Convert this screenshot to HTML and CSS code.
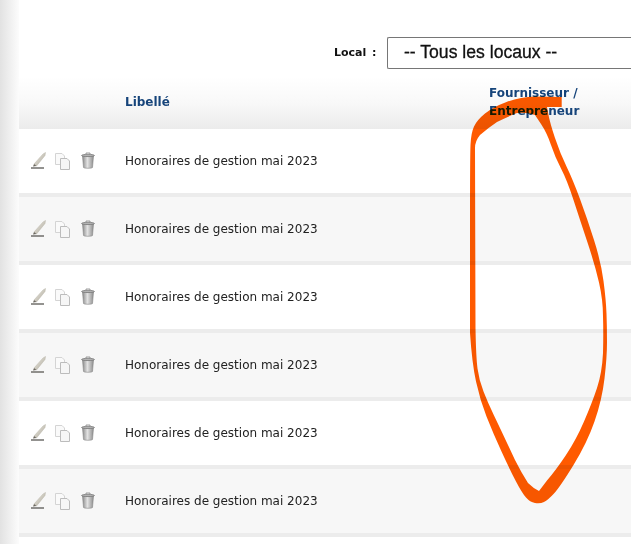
FILE: index.html
```html
<!DOCTYPE html>
<html>
  <head>
    <title>Charges</title>
    <link rel="stylesheet" href="styles.css">
  </head>
  <body>
    <div class="edge"></div>
    <div class="content">
      <div class="filter">
        <label class="filter-label" for="local">Local :</label>
        <div class="select" id="local">-- Tous les locaux --</div>
      </div>
      <div class="table-head">
        <div class="col-icons"></div>
        <div class="col-label">Libellé</div>
        <div class="col-supplier">Fournisseur /<br>Entrepreneur</div>
      </div>
      <div class="row">
        <div class="col-icons">
          <svg class="icon" width="18" height="18"><use href="#i-edit"/></svg>
          <svg class="icon" width="18" height="18"><use href="#i-copy"/></svg>
          <svg class="icon" width="18" height="18"><use href="#i-trash"/></svg>
        </div>
        <div class="col-label">Honoraires de gestion mai 2023</div>
      </div>
      <div class="row alt">
        <div class="col-icons">
          <svg class="icon" width="18" height="18"><use href="#i-edit"/></svg>
          <svg class="icon" width="18" height="18"><use href="#i-copy"/></svg>
          <svg class="icon" width="18" height="18"><use href="#i-trash"/></svg>
        </div>
        <div class="col-label">Honoraires de gestion mai 2023</div>
      </div>
      <div class="row">
        <div class="col-icons">
          <svg class="icon" width="18" height="18"><use href="#i-edit"/></svg>
          <svg class="icon" width="18" height="18"><use href="#i-copy"/></svg>
          <svg class="icon" width="18" height="18"><use href="#i-trash"/></svg>
        </div>
        <div class="col-label">Honoraires de gestion mai 2023</div>
      </div>
      <div class="row alt">
        <div class="col-icons">
          <svg class="icon" width="18" height="18"><use href="#i-edit"/></svg>
          <svg class="icon" width="18" height="18"><use href="#i-copy"/></svg>
          <svg class="icon" width="18" height="18"><use href="#i-trash"/></svg>
        </div>
        <div class="col-label">Honoraires de gestion mai 2023</div>
      </div>
      <div class="row">
        <div class="col-icons">
          <svg class="icon" width="18" height="18"><use href="#i-edit"/></svg>
          <svg class="icon" width="18" height="18"><use href="#i-copy"/></svg>
          <svg class="icon" width="18" height="18"><use href="#i-trash"/></svg>
        </div>
        <div class="col-label">Honoraires de gestion mai 2023</div>
      </div>
      <div class="row alt">
        <div class="col-icons">
          <svg class="icon" width="18" height="18"><use href="#i-edit"/></svg>
          <svg class="icon" width="18" height="18"><use href="#i-copy"/></svg>
          <svg class="icon" width="18" height="18"><use href="#i-trash"/></svg>
        </div>
        <div class="col-label">Honoraires de gestion mai 2023</div>
      </div>
    </div>

    <!-- annotation drawn by hand over the screenshot, thickness varies so it is a filled ring -->
    <svg class="scribble" width="631" height="544">
      <path fill="#ff5a00" fill-rule="evenodd" d="M561.7 97 L535 96.5 Q520 97 506.5 102 Q493 107 485 113.5 Q477 120 474 126.5 Q471 133 470.5 145 Q470 157 470 220 L470 333 Q472 363 476 381.5 Q480 400 486.5 416.5 Q493 433 501.5 451.5 Q510 470 516 481.5 Q522 493 526 497.5 Q530 502 535 503 Q540 504 544 502 Q548 500 554 493.5 Q560 487 573.5 465 Q587 443 594.5 421.5 Q602 400 604.5 378.5 Q607 357 607 342 Q607 327 606.5 313.5 Q606 300 603.5 281 Q601 262 594 240 Q587 218 580 199 Q573 180 566.5 166.5 Q560 153 555 138 Q550 123 548.5 115 L547 107 L561.7 107 Z
        M535 115 L541 124 Q547 133 551 145 Q555 157 561 168.5 Q567 180 573.5 200 Q580 220 587.5 242.5 Q595 265 599 282.5 Q603 300 603 316.5 Q603.5 333 603 353 Q602 373 597 388 Q592 403 584 421.5 Q576 440 566 455 Q556 470 547 480.5 L539 491 Q533 488 528 483 Q521 472 515 460 L507.5 444 Q500 428 494 415.5 Q488 403 483.5 391.5 Q479 380 477.5 368.5 Q476 357 475.5 328 L475 148 Q475 141 480 135 Q488 128 497 122 Q507 117 517 113 Q526 112 535 115 Z"/>
    </svg>

    <svg width="0" height="0" class="defs">
      <defs>
        <linearGradient id="trash-fill" x1="0" y1="0" x2="1" y2="0">
          <stop offset="0" stop-color="#8c8c8c"/>
          <stop offset="0.45" stop-color="#e2e2e2"/>
          <stop offset="1" stop-color="#8e8e8e"/>
        </linearGradient>
        <linearGradient id="pen-fill" x1="0" y1="0" x2="1" y2="1">
          <stop offset="0" stop-color="#f4f1e8"/>
          <stop offset="1" stop-color="#a8a498"/>
        </linearGradient>
        <symbol id="i-edit" viewBox="0 0 18 18">
          <path d="M5 12 L14 2 L16.5 0.5 L16 3.5 L7.5 14 Z" fill="url(#pen-fill)" stroke="#bab6aa" stroke-width="0.5"/>
          <path d="M5 12 L7.5 14 L4 14.5 Z" fill="#6b675f"/>
          <path d="M2 16 H15" stroke="#4c4a46" stroke-width="1.2"/>
        </symbol>
        <symbol id="i-copy" viewBox="0 0 18 18">
          <path d="M1.5 1.5 H8 L10.5 4 V12.5 H1.5 Z" fill="#fafafa" stroke="#d4d4d4"/>
          <path d="M6.5 6.5 H13 L15.5 9 V17.5 H6.5 Z" fill="#f6f6f6" stroke="#bcbcbc"/>
        </symbol>
        <symbol id="i-trash" viewBox="0 0 18 18">
          <path d="M3.5 4 L4.5 15.5 C4.7 16.5 13.3 16.5 13.5 15.5 L14.5 4 Z" fill="url(#trash-fill)" stroke="#858585" stroke-width="0.6"/>
          <path d="M2.5 3.5 C3 1.9 15 1.9 15.5 3.5 C15 4.9 3 4.9 2.5 3.5 Z" fill="#b4b4b4" stroke="#737373" stroke-width="0.7"/>
          <path d="M7 2.3 V1 H11 V2.3" fill="none" stroke="#858585" stroke-width="0.8"/>
        </symbol>
      </defs>
    </svg>
  </body>
</html>
```

FILE: styles.css
```css
html, body {
  margin: 0;
  height: 544px;
  overflow: hidden;
}
body {
  display: flex;
  font-family: "DejaVu Sans", Verdana, sans-serif;
  font-size: 12px;
  color: #222;
  background: #fff;
  position: relative;
}
.edge {
  flex: 0 0 19px;
  background: linear-gradient(to right, #e2e2e2, #f4f4f4 70%, #fcfcfc);
}
.content {
  flex: 1;
  min-width: 0;
}
.filter {
  display: flex;
  align-items: flex-start;
  height: 37px;
  margin-top: 37px;
  padding-left: 315px;
}
.filter-label {
  flex: 0 0 53px;
  font-size: 11px;
  font-weight: bold;
  line-height: 32px;
  word-spacing: 2px;
  white-space: nowrap;
  color: #111;
}
.select {
  flex: 1;
  box-sizing: border-box;
  height: 32px;
  line-height: 29px;
  padding-left: 16px;
  font-family: "Liberation Sans", Arial, sans-serif;
  font-size: 17.6px;
  -webkit-text-stroke: 0.3px #111;
  color: #111;
  border: 1px solid #767676;
  border-right: none;
  border-radius: 2px 0 0 2px;
  background: #fff;
}
.table-head {
  display: flex;
  align-items: center;
  height: 55px;
  background: linear-gradient(to bottom, #fff 5%, #f8f8f8 55%, #ebebeb);
  color: #16447a;
  font-weight: bold;
  line-height: 18px;
}
.row {
  display: flex;
  align-items: center;
  height: 64px;
  border-bottom: 4px solid #ececec;
  background: #fff;
}
.alt {
  background: #f7f7f7;
}
.col-icons {
  flex: 0 0 106px;
  display: flex;
  gap: 7px;
  padding-left: 10px;
  box-sizing: border-box;
}
.col-label {
  flex: 0 0 364px;
}
.col-supplier {
  flex: 1;
}
.icon {
  display: block;
}
.defs {
  position: absolute;
}
.scribble {
  position: absolute;
  left: 0;
  top: 0;
  pointer-events: none;
  mix-blend-mode: multiply;
}
```
